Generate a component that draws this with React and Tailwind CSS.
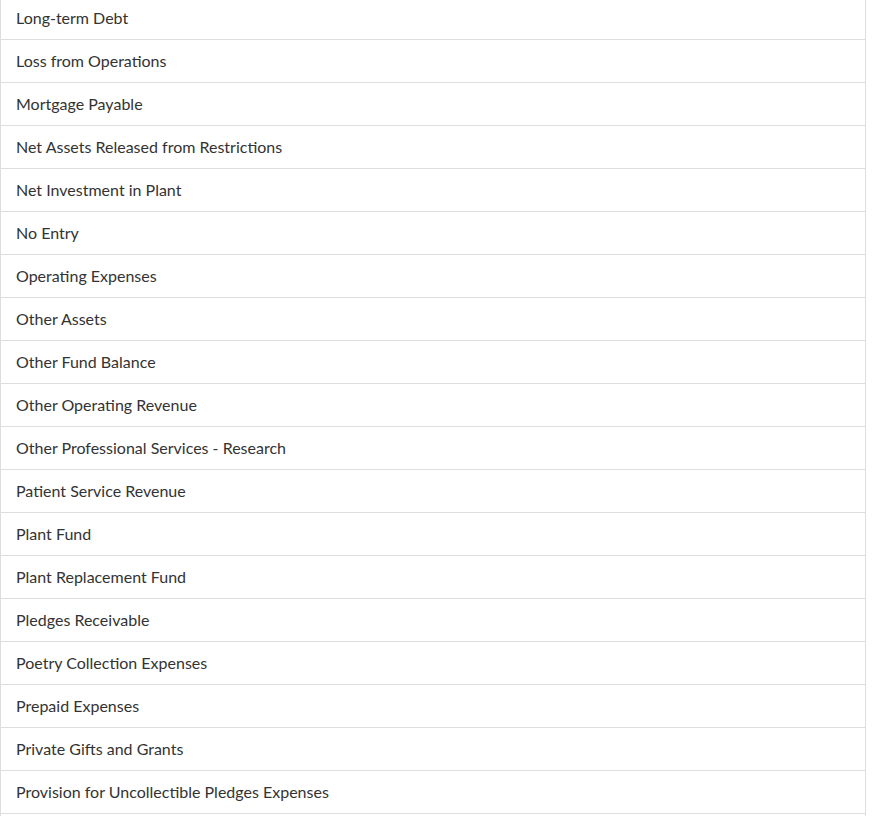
const items = [
  "Long-term Debt",
  "Loss from Operations",
  "Mortgage Payable",
  "Net Assets Released from Restrictions",
  "Net Investment in Plant",
  "No Entry",
  "Operating Expenses",
  "Other Assets",
  "Other Fund Balance",
  "Other Operating Revenue",
  "Other Professional Services - Research",
  "Patient Service Revenue",
  "Plant Fund",
  "Plant Replacement Fund",
  "Pledges Receivable",
  "Poetry Collection Expenses",
  "Prepaid Expenses",
  "Private Gifts and Grants",
  "Provision for Uncollectible Pledges Expenses",
];

export default function App() {
  return (
    <div className="h-[816px] overflow-hidden bg-white" style={{ fontFamily: "Lato, 'Open Sans', sans-serif" }}>
      <div className="w-[866px] -mt-[3px] border-l border-r border-[#dddddd]">
        {items.map((t) => (
          <div
            key={t}
            className="h-[43px] flex items-center pl-[15px] border-b border-[#dddddd] text-[16px] text-[#333333]"
          >
            {t}
          </div>
        ))}
        <div className="h-[43px]" />
      </div>
    </div>
  );
}
